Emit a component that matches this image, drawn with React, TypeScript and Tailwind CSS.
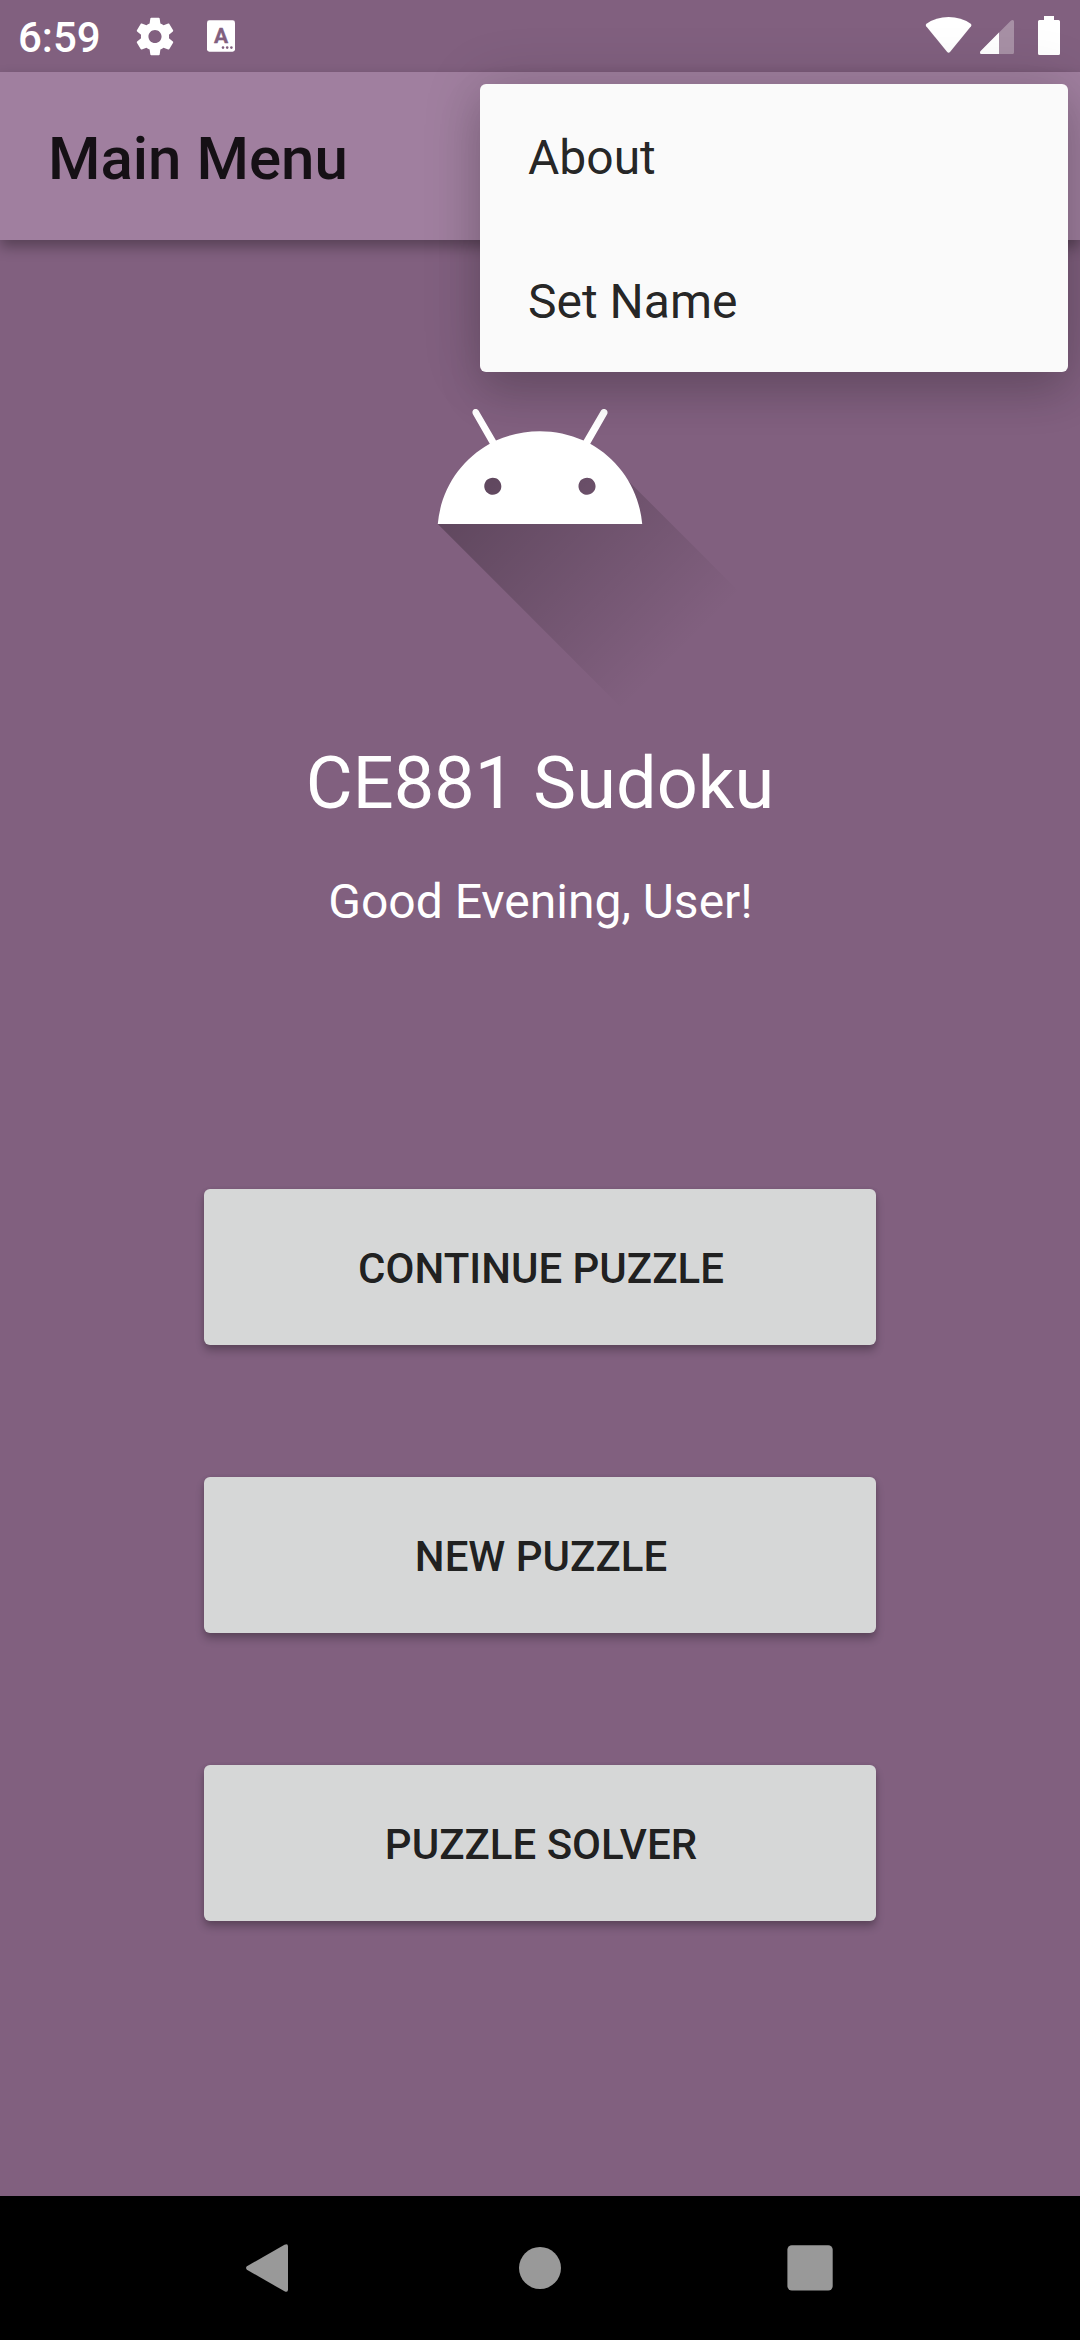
const ACTIONS = ["CONTINUE PUZZLE", "NEW PUZZLE", "PUZZLE SOLVER"];
const MENU_ITEMS = ["About", "Set Name"];

function StatusBar() {
  return (
    <div className="flex h-[72px] items-center justify-between bg-[#81607f] text-white">
      <div className="flex h-full items-center pl-[18px]">
        <span className="w-[114px] pt-[4px] text-[42px] leading-[50px] font-medium">6:59</span>
        <svg className="h-[45px] w-[46px]" viewBox="0 0 24 24" fill="currentColor">
          <path d="M19.43 12.98c.04-.32.07-.64.07-.98s-.03-.66-.07-.98l2.11-1.65c.19-.15.24-.42.12-.64l-2-3.46c-.12-.22-.39-.3-.61-.22l-2.49 1c-.52-.4-1.08-.73-1.69-.98l-.38-2.65C14.46 2.18 14.25 2 14 2h-4c-.25 0-.46.18-.49.42l-.38 2.65c-.61.25-1.17.59-1.69.98l-2.49-1c-.23-.09-.49 0-.61.22l-2 3.46c-.13.22-.07.49.12.64l2.11 1.65c-.04.32-.07.65-.07.98s.03.66.07.98l-2.11 1.65c-.19.15-.24.42-.12.64l2 3.46c.12.22.39.3.61.22l2.49-1c.52.4 1.08.73 1.69.98l.38 2.65c.03.24.24.42.49.42h4c.25 0 .46-.18.49-.42l.38-2.65c.61-.25 1.17-.59 1.69-.98l2.49 1c.23.09.49 0 .61-.22l2-3.46c.12-.22.07-.49-.12-.64l-2.11-1.65zM12 15.5c-1.93 0-3.5-1.57-3.5-3.5s1.57-3.5 3.5-3.5 3.5 1.57 3.5 3.5-1.57 3.5-3.5 3.5z" />
        </svg>
        <svg className="ml-[29px] h-8 w-7" viewBox="0 0 28 32">
          <rect y="0.3" width="28" height="31.4" rx="2.4" fill="#fff" />
          <text x="14" y="23" textAnchor="middle" fontSize="21" fontWeight="700" fill="#81607f" stroke="#81607f" strokeWidth="0.4" strokeLinejoin="round">A</text>
          <circle cx="16" cy="27.6" r="1.3" fill="#81607f" />
          <circle cx="20.2" cy="27.6" r="1.3" fill="#81607f" />
          <circle cx="24.4" cy="27.6" r="1.3" fill="#81607f" />
        </svg>
      </div>
      <svg className="h-[72px] w-[160px]" viewBox="920 0 160 72" fill="#fff">
        <path d="M926.2 26.3Q925 24.8 926.5 23.7Q936 17 948.6 17T970.7 23.7Q972.2 24.8 971 26.3L950 52Q948.6 53.5 947.2 52Z" />
        <path d="M981.5 54Q980 54 980 52.5Q980 51.5 980.7 50.9L1010.8 20.8Q1011.6 20 1012.7 20Q1014 20 1014 21.5V52.5Q1014 54 1012.5 54Z" opacity="0.3" />
        <path d="M981.5 54Q980 54 980 52.5Q980 51.5 980.7 50.9L999 32.6V54Z" />
        <path d="M1044 16H1054V20H1058.5Q1060 20 1060 21.5V53.5Q1060 55 1058.5 55H1039.5Q1038 55 1038 53.5V21.5Q1038 20 1039.5 20H1044Z" />
      </svg>
    </div>
  );
}

function AndroidLogo() {
  return (
    <svg className="h-[480px] w-[480px]" viewBox="0 0 108 108">
      <defs>
        <linearGradient id="shade" gradientUnits="userSpaceOnUse" x1="42.9492" y1="49.5979" x2="85.8476" y2="92.4963">
          <stop offset="0" stopColor="#000" stopOpacity="0.267" />
          <stop offset="1" stopColor="#000" stopOpacity="0" />
        </linearGradient>
      </defs>
      <path fill="url(#shade)" d="M31,63.928c0,0 6.4,-11 12.1,-13.1c7.2,-2.6 26,-1.4 26,-1.4l38.1,38.1L107,108.928l-32,-1L31,63.928z" />
      <path
        fill="#fff"
        d="M65.3,45.828l3.8,-6.6c0.2,-0.4 0.1,-0.9 -0.3,-1.1c-0.4,-0.2 -0.9,-0.1 -1.1,0.3l-3.9,6.7c-6.3,-2.8 -13.4,-2.8 -19.7,0l-3.9,-6.7c-0.2,-0.4 -0.7,-0.5 -1.1,-0.3C38.8,38.328 38.7,38.828 38.9,39.228l3.8,6.6C36.2,49.428 31.7,56.028 31,63.928h46C76.3,56.028 71.8,49.428 65.3,45.828zM43.4,57.328c-0.8,0 -1.5,-0.5 -1.8,-1.2c-0.3,-0.7 -0.1,-1.5 0.4,-2.1c0.5,-0.5 1.4,-0.7 2.1,-0.4c0.7,0.3 1.2,1 1.2,1.8C45.3,56.528 44.5,57.328 43.4,57.328zM64.6,57.328c-0.8,0 -1.5,-0.5 -1.8,-1.2s-0.1,-1.5 0.4,-2.1c0.5,-0.5 1.4,-0.7 2.1,-0.4c0.7,0.3 1.2,1 1.2,1.8C66.5,56.528 65.6,57.328 64.6,57.328z"
      />
    </svg>
  );
}

function OverflowMenu() {
  return (
    <div className="absolute top-[84px] right-3 w-[588px] rounded-[6px] bg-[#fafafa] shadow-[0_22px_44px_rgba(0,0,0,0.15),0_0_60px_rgba(0,0,0,0.15)]">
      {MENU_ITEMS.map((item) => (
        <div key={item} className="flex h-36 items-center px-12 pt-[3px] text-[48px] leading-[56px] text-black/87">
          {item}
        </div>
      ))}
    </div>
  );
}

function NavBar() {
  return (
    <div className="flex h-36 items-center justify-center gap-[198px] bg-black">
      <svg className="h-[72px] w-[72px]" viewBox="0 0 72 72" fill="#999">
        <path d="M12.9 37.7Q11.2 36 12.9 34.3L50.5 12.7Q54 11 54 14.5V57.5Q54 61 50.5 59.3Z" />
      </svg>
      <svg className="h-[72px] w-[72px]" viewBox="0 0 72 72" fill="#999">
        <circle cx="36" cy="36" r="21" />
      </svg>
      <svg className="h-[72px] w-[72px]" viewBox="0 0 72 72" fill="#999">
        <rect x="13.4" y="13.3" width="45.3" height="45.3" rx="4.5" />
      </svg>
    </div>
  );
}

export default function App() {
  return (
    <div className="relative flex h-[2340px] w-[1080px] flex-col overflow-hidden bg-[#81607f] font-['Roboto',sans-serif]">
      <StatusBar />
      <header className="flex h-[168px] items-center bg-[#a07f9f] px-12 pt-[6px] shadow-[0_7px_13px_rgba(0,0,0,0.32)]">
        <h1 className="text-[60px] leading-[70px] font-medium text-black/87">Main Menu</h1>
      </header>
      <main className="flex flex-1 flex-col items-center text-white">
        <AndroidLogo />
        <h2 className="mt-[22px] text-[72px] leading-[84px] tracking-[0.1px]">CE881 Sudoku</h2>
        <p className="mt-12 pl-[1px] text-[48px] leading-[56px]">Good Evening, User!</p>
        <div className="mt-[259px] flex flex-col gap-[132px]">
          {ACTIONS.map((label) => (
            <button
              key={label}
              className="h-[156px] w-[672px] rounded-[6px] bg-[#d6d7d7] pt-[4px] pl-[2px] text-[42px] leading-[50px] font-medium text-black/87 shadow-[0_6px_8px_rgba(0,0,0,0.24),0_1px_5px_rgba(0,0,0,0.1)]"
            >
              {label}
            </button>
          ))}
        </div>
      </main>
      <NavBar />
      <OverflowMenu />
    </div>
  );
}
